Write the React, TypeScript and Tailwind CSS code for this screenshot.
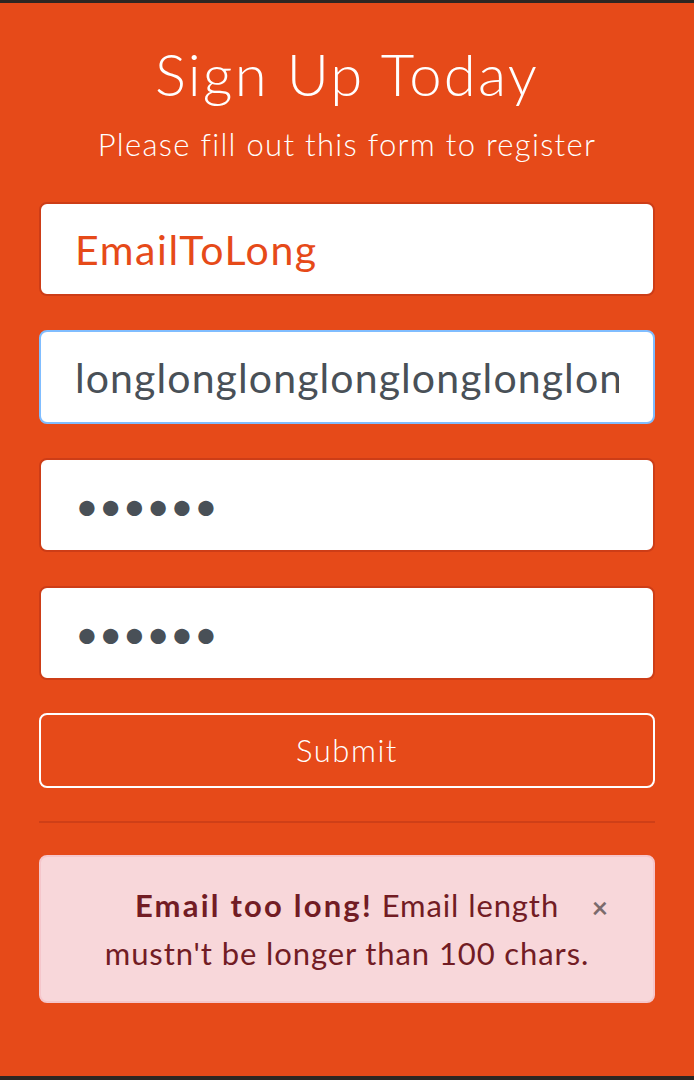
import React from 'react';

const font = { fontFamily: 'Lato, "Open Sans", sans-serif' };

export default function App() {
  return (
    <div className="min-h-screen bg-[#2e2622] pt-[3px] pb-[4px]" style={font}>
      <div className="bg-[#e64a19] h-[1073px] px-[39px] pt-[35px]">
        <h1 className="text-center text-white text-[58px] leading-[72px] font-light tracking-[2.2px]">Sign Up Today</h1>
        <p className="text-center text-white text-[31px] leading-[40px] font-light tracking-[1.3px] mt-[14px]">
          Please fill out this form to register
        </p>

        <form className="mt-[38px] flex flex-col gap-[34px]" onSubmit={e => e.preventDefault()}>
          <input
            readOnly
            value="EmailToLong"
            className="h-[94px] w-full rounded-[8px] border-2 border-[#cd3d17] bg-white px-[34px] text-[41px] tracking-[1.6px] text-[#e64a19] outline-none"
          />
          <input
            readOnly
            value="longlonglonglonglonglonglonglonglong@mail.com"
            className="h-[94px] w-full rounded-[8px] border-2 border-[#80bdff] bg-white px-[34px] text-[41px] tracking-[1.1px] text-[#495057] outline-none"
          />
          <input
            readOnly
            type="password"
            value="123456"
            className="h-[94px] w-full rounded-[8px] border-2 border-[#cd3d17] bg-white px-[34px] text-[41px] text-[#495057] outline-none"
          />
          <input
            readOnly
            type="password"
            value="123456"
            className="h-[94px] w-full rounded-[8px] border-2 border-[#cd3d17] bg-white px-[34px] text-[41px] text-[#495057] outline-none"
          />
        </form>

        <button className="mt-[33px] h-[75px] w-full rounded-[8px] border-2 border-white text-[31px] tracking-[1.5px] font-light text-white">
          Submit
        </button>

        <hr className="mt-[33px] border-0 h-[2px] bg-[#cf3f17]" />

        <div className="relative mt-[32px] rounded-[8px] border-2 border-[#f5c6cb] bg-[#f8d7da] px-[30px] py-[24px] text-center text-[31px] leading-[48px] tracking-[0.9px] text-[#721c24]">
          <strong className="font-bold tracking-[2.2px]">Email too long!</strong> Email length
          <br />
          mustn't be longer than 100 chars.
          <button className="absolute right-[44px] top-[36px] text-[28px] leading-none font-bold text-black opacity-50">
            ×
          </button>
        </div>
      </div>
    </div>
  );
}
